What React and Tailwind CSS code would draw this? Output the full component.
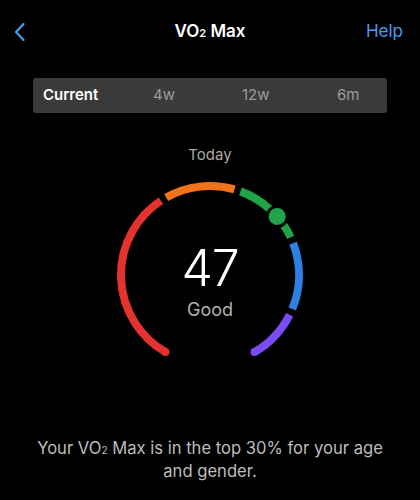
import React from 'react'

const CX = 100
const CY = 100
const R = 89

function pt(deg) {
  const a = (deg * Math.PI) / 180
  return [CX + R * Math.cos(a), CY + R * Math.sin(a)]
}

function arc(from, to) {
  const [x1, y1] = pt(from)
  const [x2, y2] = pt(to)
  const large = to - from > 180 ? 1 : 0
  return `M ${x1.toFixed(2)} ${y1.toFixed(2)} A ${R} ${R} 0 ${large} 1 ${x2.toFixed(2)} ${y2.toFixed(2)}`
}

const SEGMENTS = [
  { from: 120, to: 236.5, color: '#e5312f' },
  { from: 240.5, to: 286, color: '#f0731b' },
  { from: 290, to: 335, color: '#21a447' },
  { from: 339, to: 382.5, color: '#2c80e2' },
  { from: 386.5, to: 420, color: '#7a4cf2' },
]

function Gauge() {
  const [sx, sy] = pt(120)
  const [ex, ey] = pt(420)
  const [dx, dy] = pt(319)
  return (
    <div className="relative mx-auto w-[200px] h-[190px]">
      <svg width="200" height="190" viewBox="0 0 200 190">
        {SEGMENTS.map(s => (
          <path key={s.from} d={arc(s.from, s.to)} stroke={s.color} strokeWidth="8" fill="none" />
        ))}
        <circle cx={sx} cy={sy} r="4" fill="#e5312f" />
        <circle cx={ex} cy={ey} r="4" fill="#7a4cf2" />
        <circle cx={dx} cy={dy} r="11.5" fill="#000" />
        <circle cx={dx} cy={dy} r="8.5" fill="#21a447" />
      </svg>
      <div className="absolute inset-x-0 top-[63px] flex flex-col items-center">
        <div className="text-[50px] leading-[60px] font-light text-white tracking-tight">47</div>
        <div className="text-[18px] leading-[22px] text-[#b3b3b3] mt-[1px]">Good</div>
      </div>
    </div>
  )
}

export default function App() {
  return (
    <div className="w-[420px] h-[500px] bg-black overflow-hidden" style={{ fontFamily: 'Inter, "Noto Sans", sans-serif' }}>
      {/* Nav bar */}
      <div className="relative h-16 flex items-center justify-between pl-[12px] pr-[17px]">
        <svg width="16" height="22" viewBox="0 0 16 22" className="text-[#4a9cf0]">
          <path d="M11.5 3 L4 11 L11.5 19" stroke="currentColor" strokeWidth="2.2" fill="none" strokeLinecap="round" strokeLinejoin="round" />
        </svg>
        <div className="absolute inset-x-0 text-center text-white text-[17px] font-semibold pointer-events-none">
          VO<span className="text-[11px]">2</span> Max
        </div>
        <div className="text-[17px] text-[#4a9cf0]">Help</div>
      </div>

      {/* Range selector */}
      <div className="mx-[33px] mt-[14px] h-[35px] rounded-[3px] bg-[#3a3a3a] flex items-center pl-[10px] text-[15px]">
        <span className="text-white font-semibold w-[110px]">Current</span>
        <span className="text-[#9b9b9b] w-[89px]">4w</span>
        <span className="text-[#9b9b9b] w-[95px]">12w</span>
        <span className="text-[#9b9b9b]">6m</span>
      </div>

      <div className="mt-[32px] text-center text-[15px] leading-[20px] text-[#a9a9a9]">Today</div>

      <div className="mt-[10px]">
        <Gauge />
      </div>

      <p className="mt-[73px] px-6 text-center text-[16.6px] leading-[21px] text-[#bdbdbd]">
        Your VO<span className="text-[10px]">2</span> Max is in the top 30% for your age and gender.
      </p>
    </div>
  )
}
